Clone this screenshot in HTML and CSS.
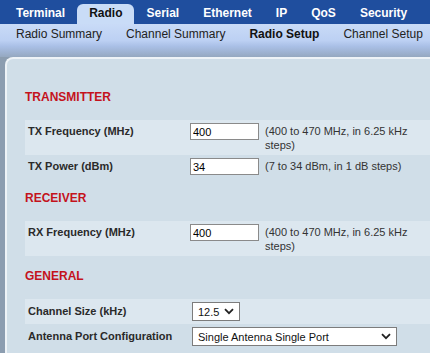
FILE: index.html
```html
<!DOCTYPE html>
<html lang="en">
<head>
    <meta charset="UTF-8">
    <meta name="viewport" content="width=device-width, initial-scale=1.0">
    <title>Radio Setup</title>
    <link rel="stylesheet" href="styles.css">
</head>
<body>
    <nav class="topnav">
        <a href="#" class="tab">Terminal</a>
        <a href="#" class="tab active">Radio</a>
        <a href="#" class="tab">Serial</a>
        <a href="#" class="tab">Ethernet</a>
        <a href="#" class="tab">IP</a>
        <a href="#" class="tab">QoS</a>
        <a href="#" class="tab">Security</a>
    </nav>

    <nav class="subnav">
        <a href="#" class="sub">Radio Summary</a>
        <a href="#" class="sub">Channel Summary</a>
        <a href="#" class="sub current">Radio Setup</a>
        <a href="#" class="sub">Channel Setup</a>
    </nav>

    <div class="panel">
        <!-- Transmitter -->
        <section class="section">
            <h3>TRANSMITTER</h3>
            <table class="form-table">
                <colgroup><col class="c-label"><col class="c-field"><col></colgroup>
                <tr class="alt">
                    <td class="label">TX Frequency (MHz)</td>
                    <td><input type="text" class="text-in" value="400"></td>
                    <td class="hint">(400 to 470 MHz, in 6.25 kHz steps)</td>
                </tr>
                <tr>
                    <td class="label">TX Power (dBm)</td>
                    <td><input type="text" class="text-in" value="34"></td>
                    <td class="hint">(7 to 34 dBm, in 1 dB steps)</td>
                </tr>
            </table>
        </section>

        <!-- Receiver -->
        <section class="section">
            <h3>RECEIVER</h3>
            <table class="form-table">
                <colgroup><col class="c-label"><col class="c-field"><col></colgroup>
                <tr class="alt">
                    <td class="label">RX Frequency (MHz)</td>
                    <td><input type="text" class="text-in" value="400"></td>
                    <td class="hint">(400 to 470 MHz, in 6.25 kHz steps)</td>
                </tr>
            </table>
        </section>

        <!-- General -->
        <section class="section">
            <h3>GENERAL</h3>
            <table class="form-table">
                <colgroup><col class="c-label"><col class="c-field"><col></colgroup>
                <tr class="alt">
                    <td class="label tall">Channel Size (kHz)</td>
                    <td colspan="2">
                        <span class="select-box size-sel">
                            <select><option>12.5</option><option>25</option></select>
                            <svg class="chev" width="10" height="7" viewBox="0 0 10 7"><path d="M1 1.2 L5 5.2 L9 1.2" fill="none" stroke="#222" stroke-width="1.8"/></svg>
                        </span>
                    </td>
                </tr>
                <tr>
                    <td class="label tall">Antenna Port Configuration</td>
                    <td colspan="2">
                        <span class="select-box port-sel">
                            <select><option>Single Antenna Single Port</option><option>Dual Antenna Dual Port</option></select>
                            <svg class="chev" width="10" height="7" viewBox="0 0 10 7"><path d="M1 1.2 L5 5.2 L9 1.2" fill="none" stroke="#222" stroke-width="1.8"/></svg>
                        </span>
                    </td>
                </tr>
            </table>
        </section>
    </div>
</body>
</html>
```

FILE: styles.css
```css
:root {
    --nav: #1f4e9e;
    --tab-on: #c9dcf7;
    --panel: #d0dee8;
    --row: #dce7ef;
    --red: #c4121c;
}

body {
    margin: 0;
    font-family: 'Liberation Sans', Arial, sans-serif;
    background: #8c9db0;
    color: #222;
}

.topnav {
    display: flex;
    align-items: flex-end;
    height: 24px;
    padding-left: 4px;
    background: var(--nav);
}

.tab {
    height: 20px;
    line-height: 19px;
    padding: 0 12px;
    color: #fff;
    font-size: 12px;
    font-weight: bold;
    text-decoration: none;
}

.tab.active {
    background: var(--tab-on);
    color: #111;
    border-radius: 6px 6px 0 0;
}

.subnav {
    display: flex;
    padding: 0 0 13px 4px;
    background: linear-gradient(to bottom, #c9dbf7 0%, #bcd0f3 50%, #a9bfe6 68%, #95a8c0 100%);
}

.sub {
    line-height: 20px;
    padding: 0 12px;
    font-size: 12px;
    color: #222;
    text-decoration: none;
    white-space: nowrap;
}

.sub.current {
    font-weight: bold;
    color: #111;
}

.panel {
    margin-left: 5px;
    padding: 18px 0 4px 18px;
    background: var(--panel);
    border-top: 2px solid #eef3f7;
    border-left: 2px solid #eef3f7;
    border-top-left-radius: 8px;
}

.section {
    margin-top: 12px;
}

.section h3 {
    margin: 0 0 15px;
    font-size: 12px;
    line-height: 16px;
    color: var(--red);
}

.form-table {
    width: 100%;
    table-layout: fixed;
    border-collapse: collapse;
    font-size: 11px;
}

.c-label { width: 162px; }
.c-field { width: 72px; }

.form-table td {
    padding: 3px;
    vertical-align: top;
}

.form-table tr.alt {
    background: var(--row);
}

.label {
    font-weight: bold;
    line-height: 17px;
    color: #2a2a2a;
    white-space: nowrap;
}

.label.tall {
    line-height: 19px;
}

.hint {
    padding-left: 6px !important;
    padding-top: 4px !important;
    line-height: 14px;
    color: #333;
}

.text-in {
    box-sizing: border-box;
    width: 69px;
    height: 17px;
    margin: 0;
    padding: 0 2px;
    border: 1px solid #8a8a8a;
    font: 11px 'Liberation Sans', Arial, sans-serif;
    color: #000;
    background: #fff;
}

.select-box {
    position: relative;
    display: inline-block;
    margin-left: 2px;
    vertical-align: top;
}

.select-box select {
    box-sizing: border-box;
    height: 19px;
    margin: 0;
    padding: 0 0 0 5px;
    border: 1px solid #7c7c7c;
    border-radius: 0;
    appearance: none;
    -webkit-appearance: none;
    font: 11px 'Liberation Sans', Arial, sans-serif;
    color: #111;
    background: #fff;
}

.size-sel select { width: 48px; }
.port-sel select { width: 205px; }

.chev {
    position: absolute;
    top: 6px;
    right: 6px;
    pointer-events: none;
}
```
